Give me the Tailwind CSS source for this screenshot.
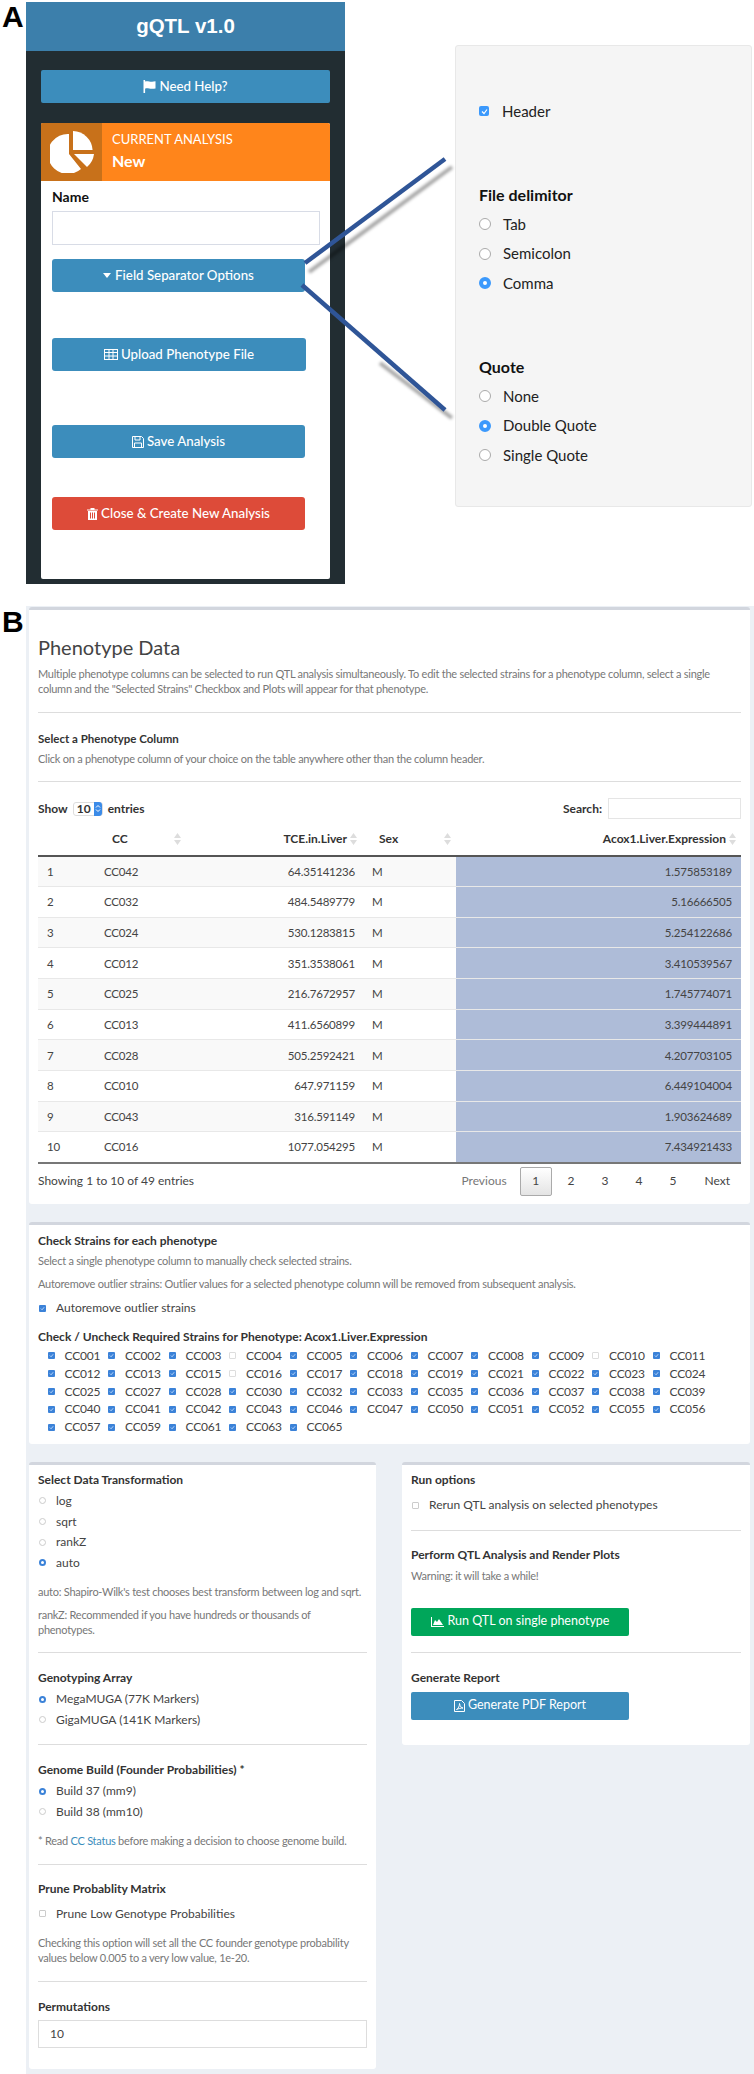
<!DOCTYPE html>
<html lang="en">
<head>
<meta charset="UTF-8">
<title>gQTL v1.0</title>
<script src="https://cdn.jsdelivr.net/npm/@tailwindcss/browser@4"></script>
</head>
<body class="bg-white text-[#333] font-['Lato','Noto_Sans',sans-serif] text-[12px] w-[754px] h-[2074px] overflow-hidden relative">

<!-- panel labels -->
<div class="absolute left-[2px] top-[0px] font-['Liberation_Sans',sans-serif] font-bold text-[30px] leading-[34px] text-black">A</div>
<div class="absolute left-[2px] top-[605px] font-['Liberation_Sans',sans-serif] font-bold text-[30px] leading-[34px] text-black">B</div>

<!-- connector lines -->
<svg class="absolute left-0 top-0" width="754" height="600" viewBox="0 0 754 600" fill="none">
  <g class="blur-[1.5px]">
    <line x1="309" y1="272" x2="452" y2="167" stroke="#000" stroke-opacity="0.35" stroke-width="4"/>
    <line x1="380" y1="363" x2="452" y2="418" stroke="#000" stroke-opacity="0.35" stroke-width="4"/>
  </g>
  <line x1="305" y1="263" x2="445" y2="159" stroke="#2f5597" stroke-width="4.500"/>
  <line x1="302" y1="285" x2="445" y2="410" stroke="#2f5597" stroke-width="4.500"/>
</svg>

<section class="flex items-start pt-[2px] h-[606px]">
  <!-- sidebar -->
  <div class="ml-[26px] w-[319px] h-[582px] bg-[#222d32] flex flex-col">
    <div class="h-[49px] bg-[#3c7fab] text-white font-['Liberation_Sans',sans-serif] font-bold text-[20.500px] flex items-center justify-center shrink-0">gQTL v1.0</div>
    <div class="px-[15px] pt-[19px] flex flex-col flex-1 pb-[5px]">
      <div class="h-[33px] rounded-[2px] bg-[#3c8dbc] text-white text-[13.300px] font-medium flex items-center justify-center gap-[3px] shrink-0">
        <svg width="13" height="13" viewBox="0 0 13 13" fill="#fff"><rect x="0.5" y="0" width="1.6" height="13"/><path d="M2 1.5c3-1.2 4.500 1 10.500-.2v7.200c-6 1.200-7.500-1-10.500.2z"/></svg>
        Need Help?
      </div>
      <div class="mt-[20px] flex-1 bg-white rounded-[2px] flex flex-col overflow-hidden">
        <div class="h-[58px] bg-[#ff851b] flex shrink-0">
          <div class="w-[61px] bg-[#c8711a] flex items-center justify-center">
            <svg width="44" height="42" viewBox="0 0 44 42" fill="#fff"><path d="M19 3v20l12 15A20 20 0 1 1 19 3z"/><path d="M23 0a20 20 0 0 1 19.600 19H23z"/><path d="M24 23h20a20 20 0 0 1-7 13z"/></svg>
          </div>
          <div class="pl-[10px] pt-[7px] text-white">
            <div class="text-[13px] leading-[18px]">CURRENT ANALYSIS</div>
            <div class="text-[16px] leading-[25px] font-bold">New</div>
          </div>
        </div>
        <div class="px-[11px] pt-[7px] flex flex-col items-start">
          <div class="font-bold text-[14px] leading-[18px] text-[#111]">Name</div>
          <div class="mt-[5px] w-[268px] h-[34px] border border-[#d8dce6] bg-white"></div>
          <div class="mt-[14px] w-[253px] h-[33px] rounded-[3px] bg-[#3c8dbc] text-white text-[13.300px] font-medium flex items-center justify-center gap-[4px]">
            <svg width="8" height="5" viewBox="0 0 8 5" fill="#fff"><path d="M0 0h8L4 5z"/></svg>
            Field Separator Options
          </div>
          <div class="mt-[46px] w-[254px] h-[33px] rounded-[3px] bg-[#3c8dbc] text-white text-[13.300px] font-medium flex items-center justify-center gap-[3px]">
            <svg width="14" height="11" viewBox="0 0 14 11" fill="none" stroke="#fff"><rect x="0.500" y="0.500" width="13" height="10"/><path d="M0 3.500h14M0 7h14M5 1v10M9 1v10"/></svg>
            Upload Phenotype File
          </div>
          <div class="mt-[54px] w-[253px] h-[33px] rounded-[3px] bg-[#3c8dbc] text-white text-[13.300px] font-medium flex items-center justify-center gap-[3px]">
            <svg width="12" height="12" viewBox="0 0 12 12" fill="none" stroke="#fff"><path d="M.5.5h9l2 2v9H.5z"/><path d="M3 .5v3.500h5V.5M2.500 11.500V7h7v4.500"/></svg>
            Save Analysis
          </div>
          <div class="mt-[39px] w-[253px] h-[33px] rounded-[3px] bg-[#dd4b39] text-white text-[13.300px] font-medium flex items-center justify-center gap-[3px]">
            <svg width="11" height="12" viewBox="0 0 11 12" fill="#fff"><path d="M0 1.500h3.500V0h4v1.500H11v1H0z"/><path d="M1 3h9v9H1zm2 1.500v6h1v-6zm2 0v6h1v-6zm2 0v6h1v-6z" fill-rule="evenodd"/></svg>
            Close &amp; Create New Analysis
          </div>
        </div>
      </div>
    </div>
  </div>

  <!-- field separator options -->
  <div class="ml-[110px] mt-[43px] w-[297px] h-[462px] bg-[#f5f5f5] border border-[#e8e8e8] rounded-[3px] pl-[23px] text-[15px] text-[#222]">
    <div class="mt-[55px] flex items-center gap-[13px] h-[20px]">
      <span class="w-[10px] h-[10px] rounded-[2px] bg-[#3b99fc] text-white flex items-center justify-center"><svg width="7" height="7" viewBox="0 0 7 7" fill="none" stroke="#fff" stroke-width="1.200"><path d="M1 3.500l2 2 3-4"/></svg></span>
      Header
    </div>
    <div class="mt-[63px] font-bold text-[16px] leading-[22px] text-[#111]">File delimitor</div>
    <div class="mt-[8px] flex items-center gap-[12px] h-[20px]"><span class="w-[12px] h-[12px] rounded-full border border-[#aaa] bg-white"></span>Tab</div>
    <div class="mt-[9.500px] flex items-center gap-[12px] h-[20px]"><span class="w-[12px] h-[12px] rounded-full border border-[#aaa] bg-white"></span>Semicolon</div>
    <div class="mt-[9.500px] flex items-center gap-[12px] h-[20px]"><span class="w-[12px] h-[12px] rounded-full border-[4px] border-[#3b99fc] bg-white"></span>Comma</div>
    <div class="mt-[63px] font-bold text-[16px] leading-[22px] text-[#111]">Quote</div>
    <div class="mt-[8px] flex items-center gap-[12px] h-[20px]"><span class="w-[12px] h-[12px] rounded-full border border-[#aaa] bg-white"></span>None</div>
    <div class="mt-[9.500px] flex items-center gap-[12px] h-[20px]"><span class="w-[12px] h-[12px] rounded-full border-[4px] border-[#3b99fc] bg-white"></span>Double Quote</div>
    <div class="mt-[9.500px] flex items-center gap-[12px] h-[20px]"><span class="w-[12px] h-[12px] rounded-full border border-[#aaa] bg-white"></span>Single Quote</div>
  </div>
</section>

<!-- phenotype page -->
<section class="ml-[26px] h-[1468px] bg-[#ecf0f5] pl-[3px] pr-[4px] pt-[1px] text-[12px]">
  <!-- data card -->
  <div class="h-[597px] bg-white border-t-[3px] border-[#d2d6de] rounded-[3px] px-[9px] pt-[23px]">
    <div class="text-[20px] leading-[28px] text-[#444]">Phenotype Data</div>
    <p class="mt-[4.500px] text-[11px] tracking-[-0.25px] leading-[15px] text-[#777]">Multiple phenotype columns can be selected to run QTL analysis simultaneously. To edit the selected strains for a phenotype column, select a single column and the "Selected Strains" Checkbox and Plots will appear for that phenotype.</p>
    <div class="mt-[16.500px] h-px bg-[#ddd]"></div>
    <div class="mt-[17.500px] font-bold text-[11.500px] leading-[15px] text-[#333]">Select a Phenotype Column</div>
    <p class="mt-[5px] text-[11px] tracking-[-0.25px] leading-[15px] text-[#777]">Click on a phenotype column of your choice on the table anywhere other than the column header.</p>
    <div class="mt-[15.500px] h-px bg-[#ddd]"></div>
    <div class="mt-[16px] h-[21px] flex items-center text-[12px] font-bold text-[#333]">
      <span>Show</span>
      <span class="ml-[5px] w-[30px] h-[14px] rounded-[3px] border border-[#ddd] flex items-center font-bold"><span class="px-[3px] grow">10</span><span class="w-[11px] h-[14px] bg-[#3b8be8] rounded-r-[3px] flex items-center justify-center"><svg width="6" height="9" viewBox="0 0 6 9" fill="none" stroke="#fff"><path d="M1 3.500l2-2 2 2M1 5.500l2 2 2-2"/></svg></span></span>
      <span class="ml-[5px]">entries</span>
      <span class="ml-auto">Search:</span>
      <span class="ml-[6px] w-[133px] h-[21px] border border-[#e5e5e5] bg-white"></span>
    </div>
    <table class="mt-[3px] w-full table-fixed text-[11.500px] text-[#444] border-b-2 border-[#777]">
      <colgroup><col class="w-[66px]"><col class="w-[80px]"><col class="w-[181px]"><col class="w-[91px]"><col></colgroup>
      <thead class="border-b-2 border-[#555] text-[#333]">
        <tr class="h-[34px] text-[12px]">
          <th></th>
          <th class="font-bold pl-[8px] pr-[3px]"><div class="flex items-center justify-between">CC<svg width="7" height="12" viewBox="0 0 7 12" fill="#ddd"><path d="M3.500 0L7 5H0zM3.500 12L0 7h7z"/></svg></div></th>
          <th class="font-bold pr-[8px]"><div class="flex items-center justify-end gap-[3px]">TCE.in.Liver<svg width="7" height="12" viewBox="0 0 7 12" fill="#ddd"><path d="M3.500 0L7 5H0zM3.500 12L0 7h7z"/></svg></div></th>
          <th class="font-bold pl-[14px] pr-[5px]"><div class="flex items-center justify-between">Sex<svg width="7" height="12" viewBox="0 0 7 12" fill="#ddd"><path d="M3.500 0L7 5H0zM3.500 12L0 7h7z"/></svg></div></th>
          <th class="font-bold pr-[5px]"><div class="flex items-center justify-end gap-[3px]">Acox1.Liver.Expression<svg width="7" height="12" viewBox="0 0 7 12" fill="#ddd"><path d="M3.500 0L7 5H0zM3.500 12L0 7h7z"/></svg></div></th>
        </tr>
      </thead>
      <tbody class="tracking-[-0.2px]">
        <tr class="h-[30.670px] bg-[#f9f9f9] border-b border-[#e8e8e8]"><td class="pl-[9px]">1</td><td>CC042</td><td class="text-right pr-[10px]">64.35141236</td><td class="pl-[7px]">M</td><td class="text-right pr-[9px] bg-[#aebcd8]">1.575853189</td></tr>
        <tr class="h-[30.670px] border-b border-[#e8e8e8]"><td class="pl-[9px]">2</td><td>CC032</td><td class="text-right pr-[10px]">484.5489779</td><td class="pl-[7px]">M</td><td class="text-right pr-[9px] bg-[#aebcd8]">5.16666505</td></tr>
        <tr class="h-[30.670px] bg-[#f9f9f9] border-b border-[#e8e8e8]"><td class="pl-[9px]">3</td><td>CC024</td><td class="text-right pr-[10px]">530.1283815</td><td class="pl-[7px]">M</td><td class="text-right pr-[9px] bg-[#aebcd8]">5.254122686</td></tr>
        <tr class="h-[30.670px] border-b border-[#e8e8e8]"><td class="pl-[9px]">4</td><td>CC012</td><td class="text-right pr-[10px]">351.3538061</td><td class="pl-[7px]">M</td><td class="text-right pr-[9px] bg-[#aebcd8]">3.410539567</td></tr>
        <tr class="h-[30.670px] bg-[#f9f9f9] border-b border-[#e8e8e8]"><td class="pl-[9px]">5</td><td>CC025</td><td class="text-right pr-[10px]">216.7672957</td><td class="pl-[7px]">M</td><td class="text-right pr-[9px] bg-[#aebcd8]">1.745774071</td></tr>
        <tr class="h-[30.670px] border-b border-[#e8e8e8]"><td class="pl-[9px]">6</td><td>CC013</td><td class="text-right pr-[10px]">411.6560899</td><td class="pl-[7px]">M</td><td class="text-right pr-[9px] bg-[#aebcd8]">3.399444891</td></tr>
        <tr class="h-[30.670px] bg-[#f9f9f9] border-b border-[#e8e8e8]"><td class="pl-[9px]">7</td><td>CC028</td><td class="text-right pr-[10px]">505.2592421</td><td class="pl-[7px]">M</td><td class="text-right pr-[9px] bg-[#aebcd8]">4.207703105</td></tr>
        <tr class="h-[30.670px] border-b border-[#e8e8e8]"><td class="pl-[9px]">8</td><td>CC010</td><td class="text-right pr-[10px]">647.971159</td><td class="pl-[7px]">M</td><td class="text-right pr-[9px] bg-[#aebcd8]">6.449104004</td></tr>
        <tr class="h-[30.670px] bg-[#f9f9f9] border-b border-[#e8e8e8]"><td class="pl-[9px]">9</td><td>CC043</td><td class="text-right pr-[10px]">316.591149</td><td class="pl-[7px]">M</td><td class="text-right pr-[9px] bg-[#aebcd8]">1.903624689</td></tr>
        <tr class="h-[30.670px]"><td class="pl-[9px]">10</td><td>CC016</td><td class="text-right pr-[10px]">1077.054295</td><td class="pl-[7px]">M</td><td class="text-right pr-[9px] bg-[#aebcd8]">7.434921433</td></tr>
      </tbody>
    </table>
    <div class="mt-[3px] flex items-center text-[12px] text-[#444]">
      <span>Showing 1 to 10 of 49 entries</span>
      <span class="ml-auto mr-[13px] text-[#777]">Previous</span>
      <span class="w-[32px] h-[29px] bg-gradient-to-b from-white to-[#e4e4e4] border border-[#aaa] rounded-[2px] flex items-center justify-center">1</span>
      <span class="ml-[16px]">2</span><span class="ml-[27px]">3</span><span class="ml-[27px]">4</span><span class="ml-[27px]">5</span>
      <span class="ml-[28px] mr-[11px]">Next</span>
    </div>
  </div>

  <!-- strains card -->
  <div class="mt-[18px] h-[222px] bg-white border-t-[3px] border-[#d2d6de] rounded-[3px] px-[9px] pt-[8px]">
    <div class="font-bold text-[12px] leading-[16px] text-[#333]">Check Strains for each phenotype</div>
    <p class="mt-[3.500px] text-[11px] tracking-[-0.25px] leading-[15px] text-[#777]">Select a single phenotype column to manually check selected strains.</p>
    <p class="mt-[8px] text-[11px] tracking-[-0.25px] leading-[15px] text-[#777]">Autoremove outlier strains: Outlier values for a selected phenotype column will be removed from subsequent analysis.</p>
    <div class="mt-[8.500px] flex items-center gap-[10px] h-[18px] text-[12px] text-[#444]">
      <span class="w-[7px] h-[7px] ml-[1px] rounded-[1px] bg-[#3b82d8] flex items-center justify-center"><svg width="5" height="5" viewBox="0 0 6 6" fill="none" stroke="#cfe3ff"><path d="M1 3l1.500 1.500L5 1.500"/></svg></span>Autoremove outlier strains
    </div>
    <div class="mt-[12px] font-bold text-[12px] leading-[16px] text-[#333]">Check / Uncheck Required Strains for Phenotype: Acox1.Liver.Expression</div>
    <div id="strains" class="mt-[2px] ml-[9.500px] grid grid-cols-[repeat(11,60.500px)] auto-rows-[17.800px] text-[12px] text-[#444] tracking-[-0.2px]"></div>
  </div>

  <!-- bottom cards -->
  <div class="mt-[18px] flex items-start">
    <div class="w-[347px] h-[607px] bg-white border-t-[3px] border-[#d2d6de] rounded-[3px] px-[9px] pt-[7px] text-[12px] text-[#444]">
      <div class="font-bold leading-[16px] text-[#333]">Select Data Transformation</div>
      <div class="mt-[2.500px] flex items-center gap-[10px] h-[20.700px]"><span class="w-[7px] h-[7px] ml-[1px] rounded-full border border-[#ccc]"></span>log</div>
      <div class="flex items-center gap-[10px] h-[20.700px]"><span class="w-[7px] h-[7px] ml-[1px] rounded-full border border-[#ccc]"></span>sqrt</div>
      <div class="flex items-center gap-[10px] h-[20.700px]"><span class="w-[7px] h-[7px] ml-[1px] rounded-full border border-[#ccc]"></span>rankZ</div>
      <div class="flex items-center gap-[10px] h-[20.700px]"><span class="w-[7px] h-[7px] ml-[1px] rounded-full border-[2.500px] border-[#3b82d8]"></span>auto</div>
      <p class="mt-[11px] text-[11px] tracking-[-0.25px] leading-[15px] text-[#777]">auto: Shapiro-Wilk's test chooses best transform between log and sqrt.</p>
      <p class="mt-[8px] text-[11px] tracking-[-0.25px] leading-[15px] text-[#777] w-[285px]">rankZ: Recommended if you have hundreds or thousands of phenotypes.</p>
      <div class="mt-[15px] h-px bg-[#ddd]"></div>
      <div class="mt-[17px] font-bold leading-[16px] text-[#333]">Genotyping Array</div>
      <div class="mt-[2.600px] flex items-center gap-[10px] h-[20.700px]"><span class="w-[7px] h-[7px] ml-[1px] rounded-full border-[2.500px] border-[#3b82d8]"></span>MegaMUGA (77K Markers)</div>
      <div class="flex items-center gap-[10px] h-[20.700px]"><span class="w-[7px] h-[7px] ml-[1px] rounded-full border border-[#ccc]"></span>GigaMUGA (141K Markers)</div>
      <div class="mt-[14px] h-px bg-[#ddd]"></div>
      <div class="mt-[17px] font-bold leading-[16px] text-[#333]">Genome Build (Founder Probabilities) *</div>
      <div class="mt-[2.600px] flex items-center gap-[10px] h-[20.700px]"><span class="w-[7px] h-[7px] ml-[1px] rounded-full border-[2.500px] border-[#3b82d8]"></span>Build 37 (mm9)</div>
      <div class="flex items-center gap-[10px] h-[20.700px]"><span class="w-[7px] h-[7px] ml-[1px] rounded-full border border-[#ccc]"></span>Build 38 (mm10)</div>
      <p class="mt-[10.500px] text-[11px] tracking-[-0.25px] leading-[15px] text-[#777]">* Read <span class="text-[#3c8dbc]">CC Status</span> before making a decision to choose genome build.</p>
      <div class="mt-[16px] h-px bg-[#ddd]"></div>
      <div class="mt-[16px] font-bold leading-[16px] text-[#333]">Prune Probablity Matrix</div>
      <div class="mt-[6.500px] flex items-center gap-[10px] h-[21px]"><span class="w-[7px] h-[7px] ml-[1px] rounded-[1px] border border-[#ccc]"></span>Prune Low Genotype Probabilities</div>
      <p class="mt-[11px] text-[11px] tracking-[-0.25px] leading-[15px] text-[#777] w-[320px]">Checking this option will set all the CC founder genotype probability values below 0.005 to a very low value, 1e-20.</p>
      <div class="mt-[15.500px] h-px bg-[#ddd]"></div>
      <div class="mt-[17px] font-bold leading-[16px] text-[#333]">Permutations</div>
      <div class="mt-[5px] h-[28px] border border-[#ddd] pl-[11px] flex items-center">10</div>
    </div>
    <div class="ml-[26px] w-[348px] h-[283px] bg-white border-t-[3px] border-[#d2d6de] rounded-[3px] px-[9px] pt-[7px] text-[12px] text-[#444]">
      <div class="font-bold leading-[16px] text-[#333]">Run options</div>
      <div class="mt-[6.500px] flex items-center gap-[10px] h-[21px]"><span class="w-[7px] h-[7px] ml-[1px] rounded-[1px] border border-[#ccc]"></span>Rerun QTL analysis on selected phenotypes</div>
      <div class="mt-[14px] h-px bg-[#ddd]"></div>
      <div class="mt-[16px] font-bold leading-[16px] text-[#333]">Perform QTL Analysis and Render Plots</div>
      <p class="mt-[5.500px] text-[11px] tracking-[-0.25px] leading-[15px] text-[#777]">Warning: it will take a while!</p>
      <div class="mt-[24.500px] w-[218px] h-[28px] rounded-[2px] bg-[#00a65a] text-white text-[12.500px] flex items-center justify-center gap-[4px]">
        <svg width="13" height="10" viewBox="0 0 13 10" fill="#fff"><path d="M0 0h1v9h12v1H0z"/><path d="M2 8l2-5 2 2 2-3 2 3 2 3z"/></svg>
        Run QTL on single phenotype
      </div>
      <div class="mt-[16px] h-px bg-[#ddd]"></div>
      <div class="mt-[17px] font-bold leading-[16px] text-[#333]">Generate Report</div>
      <div class="mt-[6px] w-[218px] h-[28px] rounded-[2px] bg-[#3c8dbc] text-white text-[12.500px] flex items-center justify-center gap-[3px]">
        <svg width="11" height="12" viewBox="0 0 11 12" fill="none" stroke="#fff"><path d="M.5.5h7l3 3v8H.5z"/><path d="M2.500 9.500c2-1 3-3.500 3-6 .5 3 2 4.500 3.500 4.500-2 0-4.500.5-6.500 1.500z"/></svg>
        Generate PDF Report
      </div>
    </div>
  </div>
</section>

<script>
  const strains = ["001","002","003","004","005","006","007","008","009","010","011","012","013","015","016","017","018","019","021","022","023","024","025","027","028","030","032","033","035","036","037","038","039","040","041","042","043","046","047","050","051","052","055","056","057","059","061","063","065"];
  const unchecked = ["004","010","016"];
  document.getElementById("strains").innerHTML = strains.map(function (id) {
    const box = unchecked.includes(id)
      ? '<i class="w-[7px] h-[7px] rounded-[1px] border border-[#ddd]"></i>'
      : '<i class="w-[7px] h-[7px] rounded-[1px] bg-[#3b82d8] flex items-center justify-center"><svg width="5" height="5" viewBox="0 0 6 6" fill="none" stroke="#cfe3ff"><path d="M1 3l1.500 1.500L5 1.500"/></svg></i>';
    return '<span class="flex items-center gap-[10px]">' + box + 'CC' + id + '</span>';
  }).join("");
</script>
</body>
</html>
